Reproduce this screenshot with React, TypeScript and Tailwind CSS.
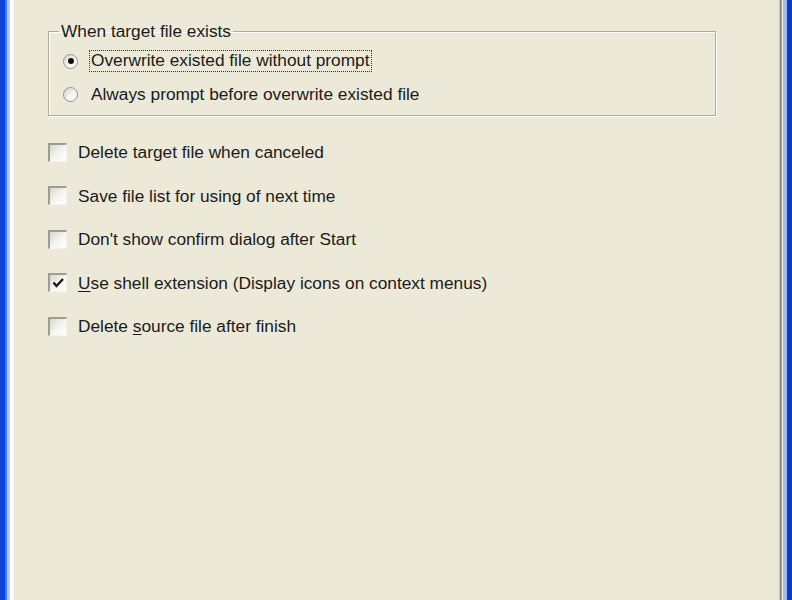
import React from 'react'

const font = { fontFamily: '"Liberation Sans", Arial, sans-serif' }

const Radio = ({ checked }: { checked?: boolean }) => (
  <span className="relative flex h-[15px] w-[15px] shrink-0 items-center justify-center rounded-full border border-[#8f9294] bg-gradient-to-br from-[#d4d4ca] via-[#f3f3ef] to-white">
    {checked && <span className="h-[6px] w-[6px] rounded-full bg-[#111]" />}
  </span>
)

const Checkbox = ({ checked }: { checked?: boolean }) => (
  <span className="flex h-[19px] w-[19px] shrink-0 items-center justify-center border-t-2 border-l-2 border-t-[#9f9d92] border-l-[#9f9d92] border-r border-b border-r-[#f4f3ee] border-b-[#f4f3ee] bg-gradient-to-br from-[#d8d6cb] via-[#f4f4f0] to-white">
    {checked && (
      <svg width="13" height="12" viewBox="0 0 13 12">
        <path d="M1.5 5.5 L4.5 9 L11 2" fill="none" stroke="#1a1a1a" strokeWidth="2.4" />
      </svg>
    )}
  </span>
)

type Item = { label: React.ReactNode; checked?: boolean }

const items: Item[] = [
  { label: 'Delete target file when canceled' },
  { label: 'Save file list for using of next time' },
  { label: "Don't show confirm dialog after Start" },
  {
    label: (
      <>
        <u className="underline-offset-2">U</u>se shell extension (Display icons on context menus)
      </>
    ),
    checked: true,
  },
  {
    label: (
      <>
        Delete <u className="underline-offset-2">s</u>ource file after finish
      </>
    ),
  },
]

export default function App() {
  return (
    <div className="flex h-[600px] w-[792px] overflow-hidden bg-[#ece9d8] text-[17.3px] text-[#1b1b1b]" style={font}>
      {/* window frame, left */}
      <div className="flex h-full shrink-0">
        <div className="w-[5px] bg-[#0f46d6]" />
        <div className="w-[2px] bg-[#3c78ee]" />
        <div className="w-[3px] bg-[#b3cdf6]" />
        <div className="w-[3px] bg-white" />
        <div className="w-[1px] bg-[#f5f4ec]" />
      </div>

      <div className="flex flex-1 flex-col pt-[21px] pl-[34px]">
        <fieldset className="w-[668px] border border-[#aeac9f] pr-2 pb-[9px] shadow-[inset_1px_1px_0_#fff,1px_1px_0_#fff]">
          <legend className="ml-[10px] h-[20px] px-[2px] leading-[20px]">When target file exists</legend>
          <div className="mt-[8px] ml-[14px] flex h-[24px] items-center">
            <Radio checked />
            <span className="ml-[11px] flex h-[22px] items-center border border-dotted border-[#333] px-[1px]">
              Overwrite existed file without prompt
            </span>
          </div>
          <div className="mt-[9px] ml-[14px] flex h-[24px] items-center">
            <Radio />
            <span className="ml-[12px] px-[1px] leading-[20px]">Always prompt before overwrite existed file</span>
          </div>
        </fieldset>

        <div className="mt-[24px] flex flex-col gap-[19.5px]">
          {items.map((item, i) => (
            <div key={i} className="flex h-[24px] items-center">
              <Checkbox checked={item.checked} />
              <span className="ml-[11px] leading-[20px]">{item.label}</span>
            </div>
          ))}
        </div>
      </div>

      {/* window frame, right */}
      <div className="flex h-full shrink-0">
        <div className="w-[1px] bg-[#c4c1b2]" />
        <div className="w-[1px] bg-[#8c8a7e]" />
        <div className="w-[1px] bg-[#a6a497]" />
        <div className="w-[1px] bg-[#eef2fb]" />
        <div className="w-[4px] bg-[#9fbcef]" />
        <div className="w-[5px] bg-[#0a3ccc]" />
      </div>
    </div>
  )
}
